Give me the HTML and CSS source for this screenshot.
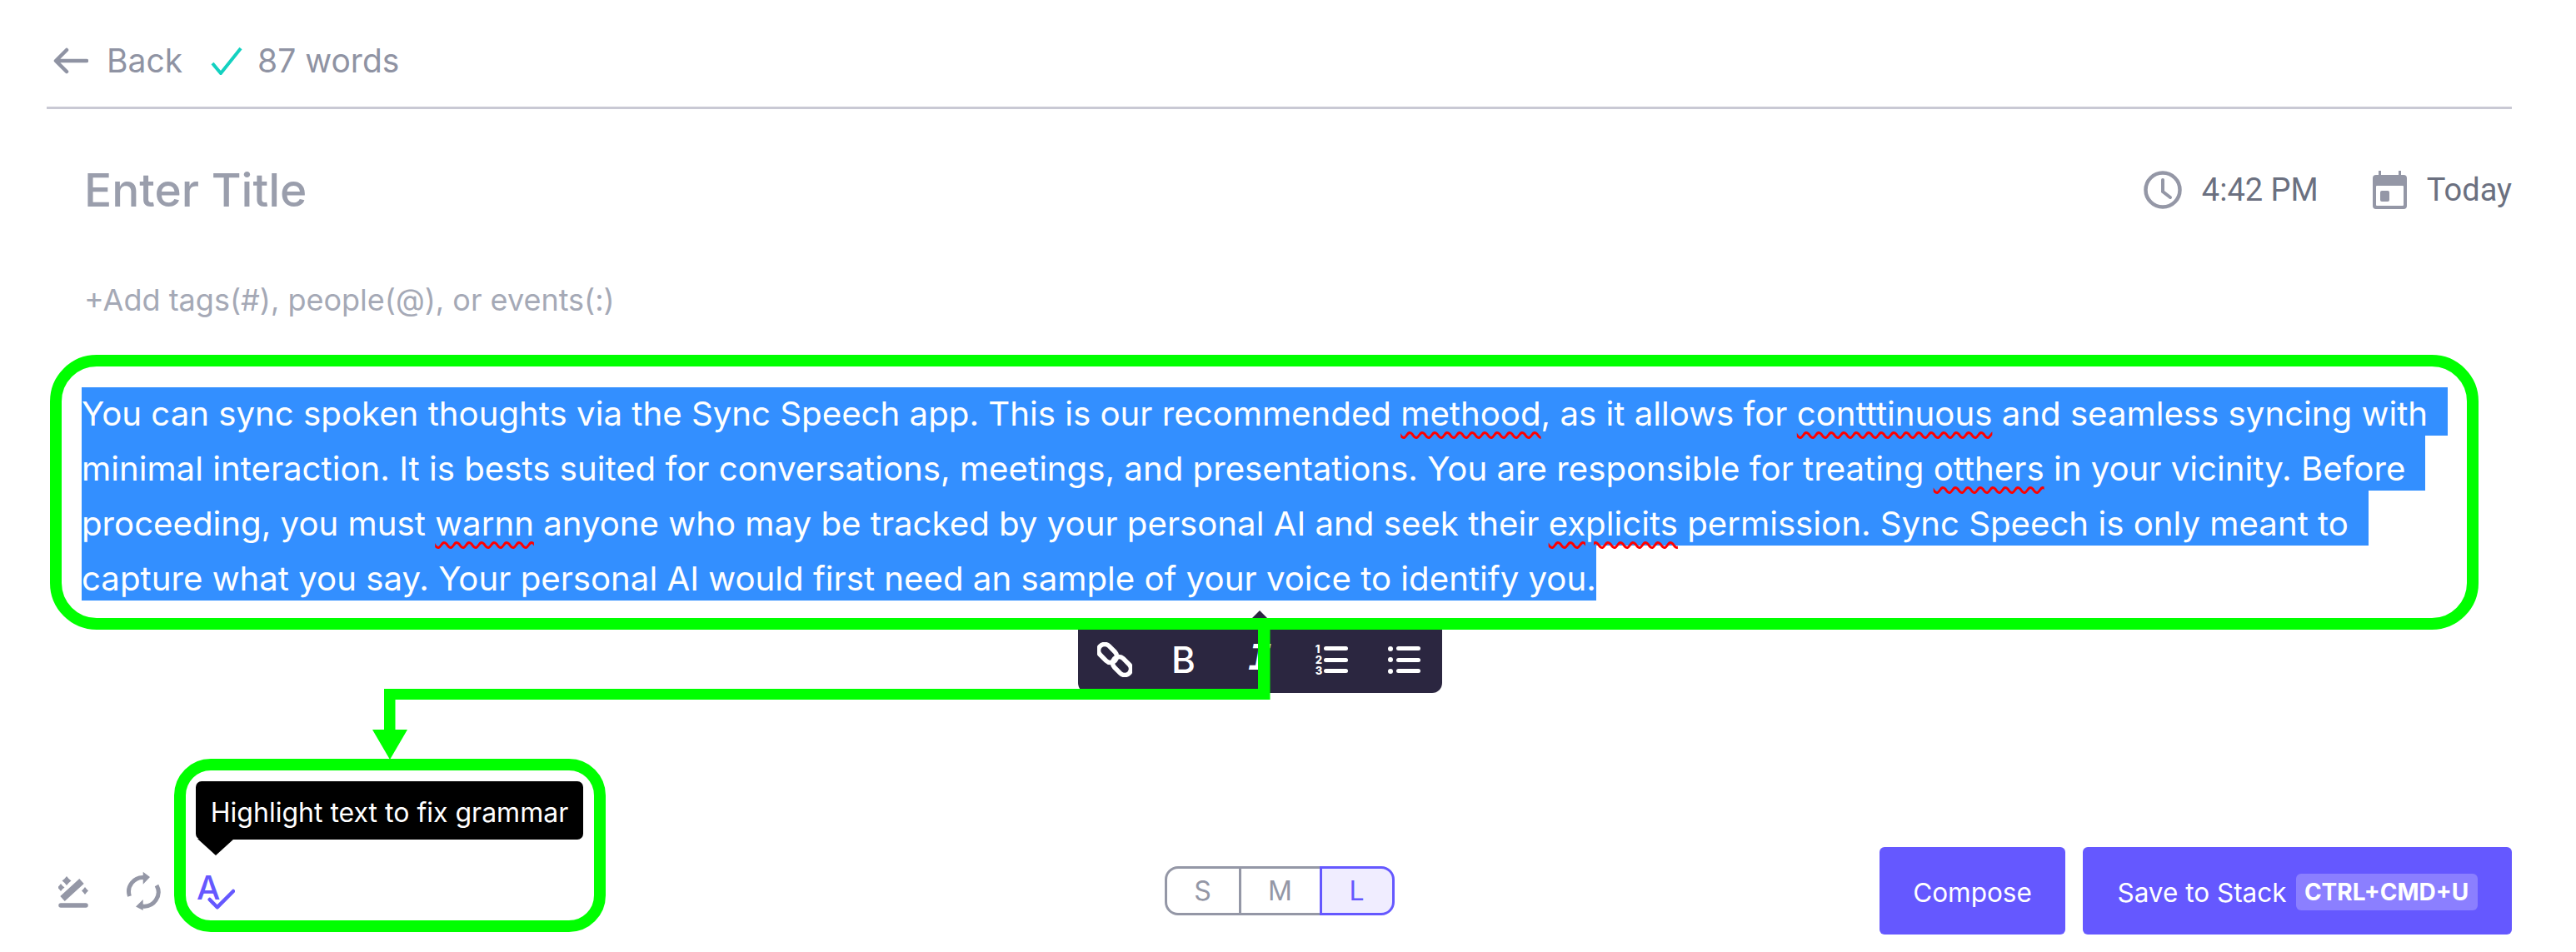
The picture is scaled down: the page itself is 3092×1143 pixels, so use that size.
FILE: index.html
```html
<!DOCTYPE html>
<html lang="en">
<head>
    <meta charset="UTF-8">
    <title>Enter Title</title>
    <link rel="stylesheet" href="styles.css">
</head>
<body>

    <div class="page">
        <header class="top-bar">
            <svg class="back-arrow" viewBox="0 0 42 32"><path d="M40 16H4M16 3 3 16l13 13" fill="none" stroke="#8f93a3" stroke-width="4.5" stroke-linecap="round" stroke-linejoin="round"/></svg>
            <span class="back-label">Back</span>
            <svg class="saved-check" viewBox="0 0 38 34"><path d="M2 20l10 12L36 2" fill="none" stroke="#13d1c0" stroke-width="4"/></svg>
            <span class="word-count">87 words</span>
        </header>

        <div class="title-row">
            <div class="title">Enter Title</div>
            <div class="meta">
                <svg class="meta-icon" viewBox="0 0 46 46"><circle cx="23" cy="23" r="20.5" fill="none" stroke="#9497a6" stroke-width="4.5"/><path d="M23 11v14l9 7" fill="none" stroke="#9497a6" stroke-width="4" stroke-linecap="round"/></svg>
                <span class="meta-time">4:42 PM</span>
                <svg class="meta-icon cal" viewBox="0 0 41 46"><path d="M7 0h3v5h21V0h3v5h3a4 4 0 0 1 4 4v33a4 4 0 0 1-4 4H4a4 4 0 0 1-4-4V9a4 4 0 0 1 4-4h3z" fill="#9497a6"/><rect x="4" y="18" width="33" height="24" rx="1" fill="#fff"/><rect x="9" y="24" width="11" height="13" rx="2" fill="#9497a6"/></svg>
                <span class="meta-today">Today</span>
            </div>
        </div>

        <div class="tags">+Add tags(#), people(@), or events(:)</div>

        <div class="editor">
            <div class="sel-line first">You can sync spoken thoughts via the Sync Speech app. This is our recommended <span class="typo">methood</span>, as it allows for <span class="typo">contttinuous</span> and seamless syncing with</div>
            <div class="sel-line">minimal interaction. It is bests suited for conversations, meetings, and presentations. You are responsible for treating <span class="typo">otthers</span> in your vicinity. Before</div>
            <div class="sel-line">proceeding, you must <span class="typo">warnn</span> anyone who may be tracked by your personal AI and seek their <span class="typo">explicits</span> permission. Sync Speech is only meant to</div>
            <div class="sel-line last">capture what you say. Your personal AI would first need an sample of your voice to identify you.</div>
        </div>

        <footer class="bottom-bar">
            <div class="tools">
                <svg class="tool-icon wand" viewBox="0 0 36 40"><path d="M5 27 28 6" stroke="#9497a6" stroke-width="8" fill="none"/><path d="M3 35h30" stroke="#9497a6" stroke-width="5.500" stroke-linecap="round" fill="none"/><path d="M10 0l2.500 3 3 2.500-3 2.500-2.500 3-2.500-3-3-2.500 3-2.500zM3 9l2 2.500 2.500 2-2.500 2-2 2.500-2-2.500-2-2 2-2zM32 13l2 2.500 2 2-2 2-2 2.500-2-2.500-2-2 2-2z" fill="#9497a6"/></svg>
                <svg class="tool-icon refresh" viewBox="0 0 44 52"><path d="M5.500 32A17 17 0 0 1 23 9.500M38 19A17 17 0 0 1 21 44" fill="none" stroke="#9497a6" stroke-width="5"/><path d="M21.700 2.700 30 9l-8.300 8.700zM21.700 36 13 44.500l8.700 4.500z" fill="#9497a6"/></svg>
                <div class="grammar">
                    <div class="tooltip">Highlight text to fix grammar</div>
                    <svg class="tool-icon grammar-icon" viewBox="0 -8 46 60"><text x="0" y="32" class="grammar-a">A</text><path d="M15.700 32l9 9.300L44 22" fill="none" stroke="#6558ff" stroke-width="4.500" stroke-linecap="round" stroke-linejoin="round"/></svg>
                </div>
            </div>

            <div class="size-toggle">
                <div class="size size-s">S</div>
                <div class="size size-m">M</div>
                <div class="size size-l">L</div>
            </div>

            <div class="actions">
                <button class="btn btn-compose">Compose</button>
                <button class="btn btn-save">Save to Stack <span class="kbd">CTRL+CMD+U</span></button>
            </div>
        </footer>

        <div class="format-bar">
            <div class="fmt"><svg class="link-icon" viewBox="0 0 42 42"><g fill="none" stroke="#fff" stroke-width="5.500"><rect x="0" y="6" width="25" height="15" rx="7.500" transform="rotate(45 12.500 13.500)"/><rect x="17" y="21" width="25" height="15" rx="7.500" transform="rotate(45 29.500 28.500)"/></g></svg></div>
            <div class="fmt fmt-b">B</div>
            <div class="fmt fmt-i">I</div>
            <div class="fmt">
                <div class="list-nums"><span>1</span><span>2</span><span>3</span></div>
                <div class="list-bars"><i></i><i></i><i></i></div>
            </div>
            <div class="fmt">
                <div class="list-dots"><i></i><i></i><i></i></div>
                <div class="list-bars"><i></i><i></i><i></i></div>
            </div>
        </div>
    </div>

    <!-- green call-outs drawn over the screenshot -->
    <div class="callout callout-editor"></div>
    <div class="callout callout-grammar"></div>
    <svg class="callout-arrow" viewBox="0 0 3092 1143"><path d="M1510 750V827H461V876H447L468 912 489 876H474.500V840H1524.500V750z" fill="#00ff00"/></svg>

</body>
</html>
```

FILE: styles.css
```css
* {
    box-sizing: border-box;
}

body {
    margin: 0;
    background-color: #fff;
    font-family: "Inter", "Noto Sans", sans-serif;
    color: #9a9eac;
}

.page {
    position: relative;
    width: 3092px;
    height: 1143px;
    padding: 0 77px 21px 56px;
    display: flex;
    flex-direction: column;
    overflow: hidden;
}

.top-bar {
    height: 131px;
    border-bottom: 3px solid #c9c9d4;
    display: flex;
    align-items: center;
    padding-left: 8px;
    padding-top: 17px;
    font-size: 39px;
    color: #8f93a3;
}

.back-arrow {
    width: 42px;
    height: 32px;
}

.back-label {
    margin-left: 22px;
}

.saved-check {
    width: 38px;
    height: 34px;
    margin-left: 34px;
}

.word-count {
    margin-left: 18px;
}

.title-row {
    margin-top: 64px;
    height: 66px;
    padding-left: 45px;
    display: flex;
    align-items: center;
    justify-content: space-between;
}

.title {
    font-size: 55px;
    font-weight: 500;
    color: #9a9eac;
}

.meta {
    display: flex;
    align-items: center;
    font-family: "Roboto", sans-serif;
    font-size: 38px;
    color: #6b7080;
}

.meta-icon {
    width: 46px;
    height: 46px;
}

.meta-icon.cal {
    width: 41px;
    margin-left: 65px;
}

.meta-time, .meta-today {
    margin-left: 24px;
}

.tags {
    margin-top: 77px;
    padding-left: 45px;
    font-size: 36px;
    line-height: 44px;
    color: #a5a9b6;
}

.editor {
    margin-top: 83px;
    padding-left: 42px;
    font-size: 40.200px;
    color: #fff;
}

.sel-line {
    width: fit-content;
    height: 66px;
    line-height: 79px;
    padding-right: 24px;
    background-color: #338fff;
    white-space: nowrap;
}

.sel-line.first {
    height: 58px;
    line-height: 63px;
}

.sel-line.last {
    padding-right: 0;
}

.typo {
    text-decoration: underline wavy #ff0000 3px;
    text-underline-offset: 7px;
}

.bottom-bar {
    margin-top: auto;
    height: 105px;
    display: grid;
    grid-template-columns: 1fr auto 1fr;
    align-items: center;
}

.tools {
    display: flex;
    align-items: center;
    padding-left: 14px;
}

.tool-icon {
    width: 36px;
    height: 40px;
    display: block;
}

.tool-icon.wand {
    margin-top: 5px;
}

.tool-icon.refresh {
    width: 44px;
    height: 52px;
    margin-left: 44px;
}

.grammar {
    position: relative;
    margin-left: 42px;
}

.grammar-icon {
    width: 46px;
    height: 60px;
}

.grammar-a {
    font-size: 40px;
    font-weight: 500;
    fill: #6558ff;
}

.tooltip {
    position: absolute;
    left: -1px;
    bottom: calc(100% + 32px);
    width: 465px;
    height: 70px;
    border-radius: 7px;
    background-color: #000;
    color: #fff;
    font-size: 32px;
    line-height: 76px;
    text-align: center;
    white-space: nowrap;
}

.tooltip::after {
    content: "";
    position: absolute;
    left: 2px;
    top: 69px;
    border-left: 22px solid transparent;
    border-right: 22px solid transparent;
    border-top: 20px solid #000;
}

.size-toggle {
    display: flex;
    width: 276px;
    height: 59px;
    font-size: 32px;
    line-height: 53px;
    text-align: center;
}

.size {
    border: 3px solid #9497a6;
    color: #9497a6;
}

.size-s {
    width: 92px;
    border-radius: 16px 0 0 16px;
}

.size-m {
    width: 94px;
    border-left: none;
    border-right: none;
}

.size-l {
    width: 90px;
    border-color: #6558ff;
    border-radius: 0 16px 16px 0;
    background-color: #f0edff;
    color: #6558ff;
}

.actions {
    display: flex;
    justify-content: flex-end;
    gap: 21px;
}

.btn {
    height: 105px;
    padding-top: 4px;
    border: none;
    border-radius: 6px;
    background-color: #6558ff;
    color: #fff;
    font-family: inherit;
    font-size: 31.500px;
    display: flex;
    align-items: center;
    justify-content: center;
}

.btn-compose {
    width: 223px;
}

.btn-save {
    width: 515px;
    gap: 11px;
}

.kbd {
    width: 218px;
    height: 44px;
    line-height: 44px;
    border-radius: 6px;
    background-color: #8b7fff;
    font-weight: 700;
    font-size: 28px;
    text-align: center;
}

/* selection toolbar */
.format-bar {
    position: absolute;
    left: 1294px;
    top: 752px;
    width: 437px;
    height: 80px;
    border-radius: 0 0 12px 12px;
    background-color: #2b2640;
    display: flex;
    align-items: center;
    color: #fff;
}

.format-bar::before {
    content: "";
    position: absolute;
    left: 199px;
    top: -19px;
    border-left: 19px solid transparent;
    border-right: 19px solid transparent;
    border-bottom: 19px solid #2b2640;
}

.fmt {
    width: 87px;
    height: 40px;
    display: flex;
    align-items: center;
    justify-content: center;
    gap: 2px;
}

.link-icon {
    width: 42px;
    height: 42px;
}

.fmt-b {
    padding-right: 8px;
    font-size: 44px;
    font-weight: 500;
}

.fmt-i {
    font-family: "Liberation Mono", monospace;
    font-size: 46px;
    font-weight: 700;
    font-style: italic;
}

.list-nums {
    display: flex;
    flex-direction: column;
    font-size: 13px;
    line-height: 13px;
    font-weight: 800;
}

.list-bars {
    display: flex;
    flex-direction: column;
    gap: 8.500px;
}

.list-bars i {
    display: block;
    width: 29px;
    height: 5px;
    border-radius: 3px;
    background-color: #fff;
}

.list-dots {
    display: flex;
    flex-direction: column;
    gap: 7.500px;
    margin-right: 2px;
}

.list-dots i {
    display: block;
    width: 6px;
    height: 6px;
    border-radius: 50%;
    background-color: #fff;
}

/* annotations */
.callout {
    position: absolute;
    border: 14px solid #00ff00;
}

.callout-editor {
    left: 60px;
    top: 426px;
    width: 2915px;
    height: 330px;
    border-radius: 56px;
}

.callout-grammar {
    left: 209px;
    top: 911px;
    width: 518px;
    height: 208px;
    border-radius: 44px;
}

.callout-arrow {
    position: absolute;
    left: 0;
    top: 0;
    width: 3092px;
    height: 1143px;
}
```
